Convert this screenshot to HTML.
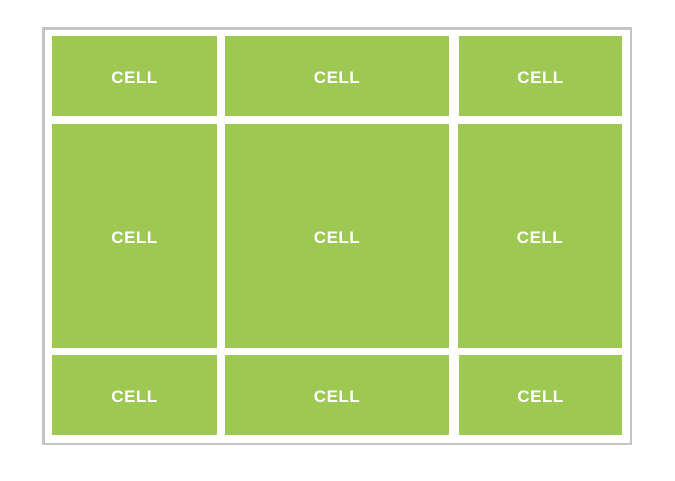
<!DOCTYPE html>
<html><head><style>
body{margin:0;width:675px;height:481px;background:#fff;position:relative;overflow:hidden;font-family:"Liberation Sans",sans-serif}
.f{position:absolute;left:42px;top:27px;width:585px;height:413px;border:3px solid #c4c4c4;border-right-width:2px;border-bottom-width:2px}
.c{position:absolute;background:#9dc852;color:#fff;font-size:17px;font-weight:bold;display:flex;align-items:center;justify-content:center;letter-spacing:0.5px;padding-top:3px;box-sizing:border-box}
</style></head><body>
<div class="f"></div>
<div class="c" style="left:52px;top:36px;width:165px;height:80px">CELL</div>
<div class="c" style="left:225px;top:36px;width:224px;height:80px">CELL</div>
<div class="c" style="left:459px;top:36px;width:163px;height:80px">CELL</div>
<div class="c" style="left:52px;top:124px;width:165px;height:224px">CELL</div>
<div class="c" style="left:225px;top:124px;width:224px;height:224px">CELL</div>
<div class="c" style="left:458px;top:124px;width:164px;height:224px">CELL</div>
<div class="c" style="left:52px;top:355px;width:165px;height:80px">CELL</div>
<div class="c" style="left:225px;top:355px;width:224px;height:80px">CELL</div>
<div class="c" style="left:459px;top:355px;width:163px;height:80px">CELL</div>
</body></html>
